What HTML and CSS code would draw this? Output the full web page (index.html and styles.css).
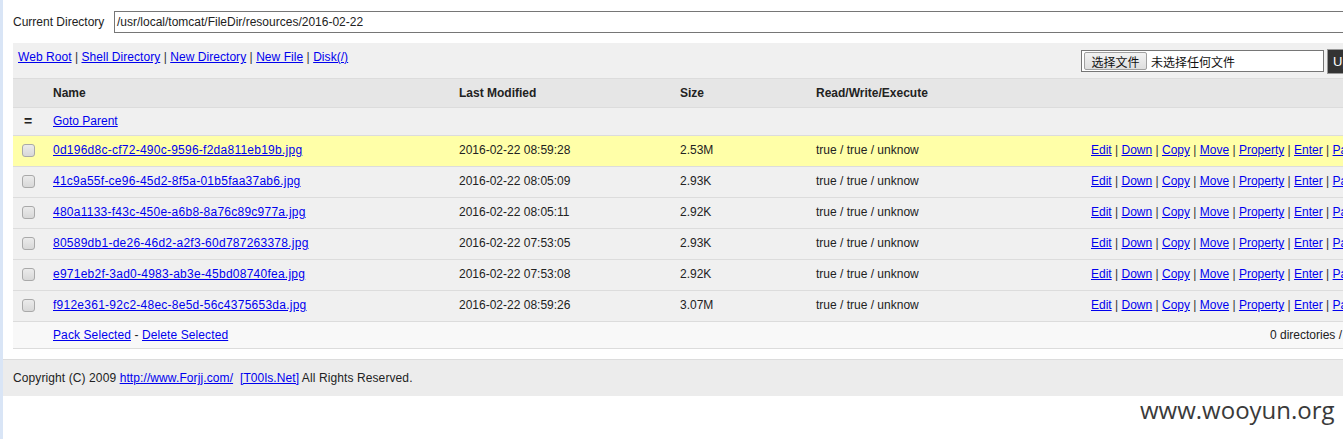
FILE: index.html
```html
<!DOCTYPE html>
<html>
<head>
<meta charset="utf-8">
<title>File Manager</title>
<link rel="stylesheet" href="styles.css">
</head>
<body>
<div class="main">
  <div class="dirbar">
    <span class="dirlabel">Current Directory</span>
    <span class="dirinput">/usr/local/tomcat/FileDir/resources/2016-02-22</span>
  </div>
  <div class="toolbar">
    <div class="links">
      <a href="#">Web Root</a><span class="sep"> | </span><a href="#">Shell Directory</a><span class="sep"> | </span><a href="#">New Directory</a><span class="sep"> | </span><a href="#">New File</a><span class="sep"> | </span><a href="#">Disk(/)</a>
    </div>
    <div class="upload">
      <span class="fileinput"><span class="filebtn">选择文件</span><span class="filename">未选择任何文件</span></span>
      <span class="upbtn">Upload</span>
    </div>
  </div>
  <div class="grid">
    <div class="row head">
      <span></span><span>Name</span><span>Last Modified</span><span>Size</span><span>Read/Write/Execute</span><span></span>
    </div>
    <div class="row parent">
      <span class="eq">=</span><span><a href="#">Goto Parent</a></span><span></span><span></span><span></span><span></span>
    </div>
    <div class="row file hl">
      <span class="cbcell"><span class="cb"></span></span><span><a class="fn" href="#">0d196d8c-cf72-490c-9596-f2da811eb19b.jpg</a></span><span>2016-02-22 08:59:28</span><span>2.53M</span><span>true / true / unknow</span>
      <span class="acts"><a href="#">Edit</a> | <a href="#">Down</a> | <a href="#">Copy</a> | <a href="#">Move</a> | <a href="#">Property</a> | <a href="#">Enter</a> | <a href="#">Pack</a></span>
    </div>
    <div class="row file">
      <span class="cbcell"><span class="cb"></span></span><span><a class="fn" href="#">41c9a55f-ce96-45d2-8f5a-01b5faa37ab6.jpg</a></span><span>2016-02-22 08:05:09</span><span>2.93K</span><span>true / true / unknow</span>
      <span class="acts"><a href="#">Edit</a> | <a href="#">Down</a> | <a href="#">Copy</a> | <a href="#">Move</a> | <a href="#">Property</a> | <a href="#">Enter</a> | <a href="#">Pack</a></span>
    </div>
    <div class="row file">
      <span class="cbcell"><span class="cb"></span></span><span><a class="fn" href="#">480a1133-f43c-450e-a6b8-8a76c89c977a.jpg</a></span><span>2016-02-22 08:05:11</span><span>2.92K</span><span>true / true / unknow</span>
      <span class="acts"><a href="#">Edit</a> | <a href="#">Down</a> | <a href="#">Copy</a> | <a href="#">Move</a> | <a href="#">Property</a> | <a href="#">Enter</a> | <a href="#">Pack</a></span>
    </div>
    <div class="row file">
      <span class="cbcell"><span class="cb"></span></span><span><a class="fn" href="#">80589db1-de26-46d2-a2f3-60d787263378.jpg</a></span><span>2016-02-22 07:53:05</span><span>2.93K</span><span>true / true / unknow</span>
      <span class="acts"><a href="#">Edit</a> | <a href="#">Down</a> | <a href="#">Copy</a> | <a href="#">Move</a> | <a href="#">Property</a> | <a href="#">Enter</a> | <a href="#">Pack</a></span>
    </div>
    <div class="row file">
      <span class="cbcell"><span class="cb"></span></span><span><a class="fn" href="#">e971eb2f-3ad0-4983-ab3e-45bd08740fea.jpg</a></span><span>2016-02-22 07:53:08</span><span>2.92K</span><span>true / true / unknow</span>
      <span class="acts"><a href="#">Edit</a> | <a href="#">Down</a> | <a href="#">Copy</a> | <a href="#">Move</a> | <a href="#">Property</a> | <a href="#">Enter</a> | <a href="#">Pack</a></span>
    </div>
    <div class="row file">
      <span class="cbcell"><span class="cb"></span></span><span><a class="fn" href="#">f912e361-92c2-48ec-8e5d-56c4375653da.jpg</a></span><span>2016-02-22 08:59:26</span><span>3.07M</span><span>true / true / unknow</span>
      <span class="acts"><a href="#">Edit</a> | <a href="#">Down</a> | <a href="#">Copy</a> | <a href="#">Move</a> | <a href="#">Property</a> | <a href="#">Enter</a> | <a href="#">Pack</a></span>
    </div>
    <div class="row foot">
      <span></span><span class="packcell"><a href="#">Pack Selected</a> - <a href="#">Delete Selected</a></span><span class="count">0 directories / 6 files</span>
    </div>
  </div>
</div>
<div class="footer">Copyright (C) 2009 <a href="#">http://www.Forjj.com/</a>&nbsp; <a href="#">[T00ls.Net]</a> All Rights Reserved.</div>
<div class="watermark">www.wooyun.org</div>
</body>
</html>
```

FILE: styles.css
```css
html, body {
  overflow: hidden;
}
body {
  margin: 0;
  border-left: 3px solid #d9e5f6;
  min-height: 439px;
  box-sizing: border-box;
  font-family: "Liberation Sans", Arial, "Noto Sans CJK SC", sans-serif;
  font-size: 12px;
  color: #222;
  background: #fff;
  position: relative;
}
a {
  color: #0000ee;
  text-decoration: underline;
}
.main {
  width: 1400px;
  padding: 11px 0 0 10px;
}
.dirbar {
  display: flex;
  align-items: center;
  height: 22px;
}
.dirlabel {
  width: 101px;
  flex: none;
  white-space: nowrap;
}
.dirinput {
  box-sizing: border-box;
  height: 22px;
  width: 1400px;
  border: 1px solid #767676;
  padding: 0 3px 0 2px;
  line-height: 20px;
  flex: none;
}
.toolbar {
  margin-top: 10px;
  height: 35px;
  background: #f0f0f0;
  border-bottom: 1px solid #dcdcdc;
  display: grid;
  grid-template-columns: 1068px auto;
}
.links {
  padding: 7px 0 0 5px;
  line-height: 15px;
  letter-spacing: 0.05px;
}
.sep {
  color: #333;
}
.upload {
  display: flex;
  align-items: center;
  gap: 3px;
  padding-top: 1px;
}
.fileinput {
  box-sizing: border-box;
  width: 243px;
  height: 22px;
  border: 1px solid #767676;
  background: #fff;
  display: flex;
  align-items: center;
  padding-left: 2px;
}
.filebtn {
  box-sizing: border-box;
  height: 18px;
  width: 63px;
  border: 1px solid #a0a0a0;
  border-radius: 2px;
  background: linear-gradient(#f2f2f2, #dedede);
  display: flex;
  align-items: center;
  justify-content: center;
  font-family: "Noto Sans CJK SC", sans-serif;
  font-size: 12px;
  color: #111;
  margin-right: 4px;
}
.filename {
  font-family: "Noto Sans CJK SC", sans-serif;
  font-size: 12px;
  color: #111;
}
.upbtn {
  box-sizing: border-box;
  height: 25px;
  padding: 0 8px 0 5px;
  background: #333;
  border: 1px solid #999;
  color: #fff;
  display: flex;
  align-items: center;
  font-size: 13px;
}
.grid {
  display: flex;
  flex-direction: column;
}
.row {
  display: grid;
  grid-template-columns: 40px 406px 221px 136px 275px 322px;
  align-items: center;
  border-bottom: 1px solid #dcdcdc;
  background: #f0f0f0;
}
.head {
  height: 28px;
  background: #e6e6e6;
  font-weight: bold;
}
.parent {
  height: 25px;
  padding-bottom: 2px;
}
.eq {
  font-weight: bold;
  font-size: 14px;
  padding-left: 11px;
}
.file {
  height: 28px;
  padding-bottom: 2px;
}
.fn {
  letter-spacing: 0.25px;
}
.hl {
  background: #ffffa8;
}
.cbcell {
  display: flex;
  padding-left: 9px;
}
.cb {
  box-sizing: border-box;
  width: 13px;
  height: 13px;
  border: 1px solid #a9a9a9;
  border-radius: 3px;
  background: linear-gradient(#ebebeb, #d8d8d8);
}
.acts {
  color: #333;
  white-space: nowrap;
}
.foot {
  height: 26px;
  background: #f8f8f8;
  grid-template-columns: 40px 1078px 282px;
}
.packcell {
  letter-spacing: 0.1px;
}
.count {
  justify-self: start;
  padding-left: 139px;
  white-space: nowrap;
}
.footer {
  margin-top: 10px;
  border-top: 1px solid #dcdcdc;
  background: #ececec;
  height: 36px;
  line-height: 36px;
  padding-left: 10px;
  white-space: nowrap;
  letter-spacing: 0.1px;
}
.watermark {
  position: absolute;
  left: 1137px;
  top: 393px;
  font-family: "Open Sans", sans-serif;
  font-size: 24px;
  color: #3a3a3a;
  white-space: nowrap;
}
```
